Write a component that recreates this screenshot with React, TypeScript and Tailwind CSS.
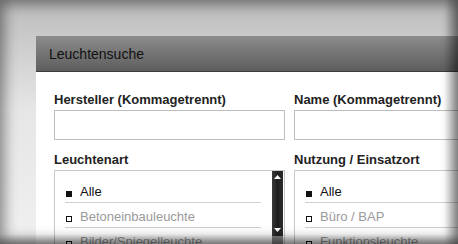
import type { ReactNode } from "react";

const leuchtenart = ["Alle", "Betoneinbauleuchte", "Bilder/Spiegelleuchte", "Deckenleuchte"];
const nutzung = ["Alle", "Büro / BAP", "Funktionsleuchte", "Industrie"];

function Label({ children }: { children: ReactNode }) {
  return <div className="mb-[3px] text-[13px] leading-[15px] font-bold text-[#222]">{children}</div>;
}

function OptionList({ items, scroll }: { items: string[]; scroll?: boolean }) {
  return (
    <div className="relative h-[90px] border border-[#c8c8c8] bg-white pt-[7px]">
      <ul className="ml-[10px] mr-[23px]">
        {items.map((item, i) => (
          <li key={item} className="flex h-[25px] items-end border-b border-[#cfcfcf] pb-[3px]">
            <span
              className={
                i === 0
                  ? "mb-[2px] ml-px mr-[8px] h-[6px] w-[6px] shrink-0 bg-[#111]"
                  : "mb-[2px] ml-px mr-[8px] h-[6px] w-[6px] shrink-0 border border-[#111] bg-white"
              }
            />
            <span className={i === 0 ? "text-[13px] leading-[15px] text-[#111]" : "text-[13px] leading-[15px] text-[#9a9a9a]"}>
              {item}
            </span>
          </li>
        ))}
      </ul>
      {scroll && (
        <div className="absolute top-0 right-px flex h-full w-[11px] flex-col">
          <div className="flex h-[65px] flex-col items-center justify-between bg-gradient-to-r from-[#3a3a3a] via-[#1e1e1e] to-[#2c2c2c] py-[4px]">
            <svg width="7" height="4" viewBox="0 0 7 4">
              <path d="M3.5 0L7 4H0z" fill="#fff" />
            </svg>
            <svg width="7" height="4" viewBox="0 0 7 4">
              <path d="M0 0h7L3.5 4z" fill="#fff" />
            </svg>
          </div>
          <div className="flex-1 bg-[#8a8a8a]" />
        </div>
      )}
    </div>
  );
}

export default function App() {
  return (
    <div
      className="relative h-[244px] w-[458px] overflow-hidden bg-gradient-to-b from-[#bcbcbc] via-[#e6e6e6] via-45% to-[#f0f0f0] pt-[36px] pl-[36px]"
      style={{ fontFamily: '"Liberation Sans", Arial, sans-serif' }}
    >
      <div className="w-[460px] bg-white">
        <div className="h-[36px] border-b border-[#3c3c3c] bg-gradient-to-b from-[#8c8c8c] to-[#5e5e5e] pl-[13px] pt-[10px] text-[14px] leading-[16px] text-[#111]">
          Leuchtensuche
        </div>
        <div className="grid grid-cols-[231px_231px] gap-x-[9px] pt-[20px] pl-[18px]">
          <div>
            <Label>Hersteller (Kommagetrennt)</Label>
            <div className="h-[30px] border border-[#bdbdbd] bg-white" />
          </div>
          <div>
            <Label>Name (Kommagetrennt)</Label>
            <div className="h-[30px] border border-[#bdbdbd] bg-white" />
          </div>
          <div className="mt-[12px]">
            <Label>Leuchtenart</Label>
            <OptionList items={leuchtenart} scroll />
          </div>
          <div className="mt-[12px]">
            <Label>Nutzung / Einsatzort</Label>
            <OptionList items={nutzung} />
          </div>
        </div>
      </div>
      <div className="pointer-events-none absolute inset-0 shadow-[inset_0_0_14px_4px_rgba(0,0,0,0.45)]" />
      <div className="pointer-events-none absolute inset-y-0 right-0 w-[14px] bg-gradient-to-r from-transparent to-[rgba(0,0,0,0.25)]" />
      <div className="pointer-events-none absolute inset-x-0 bottom-0 h-[10px] bg-gradient-to-b from-transparent to-[rgba(0,0,0,0.3)]" />
    </div>
  );
}
